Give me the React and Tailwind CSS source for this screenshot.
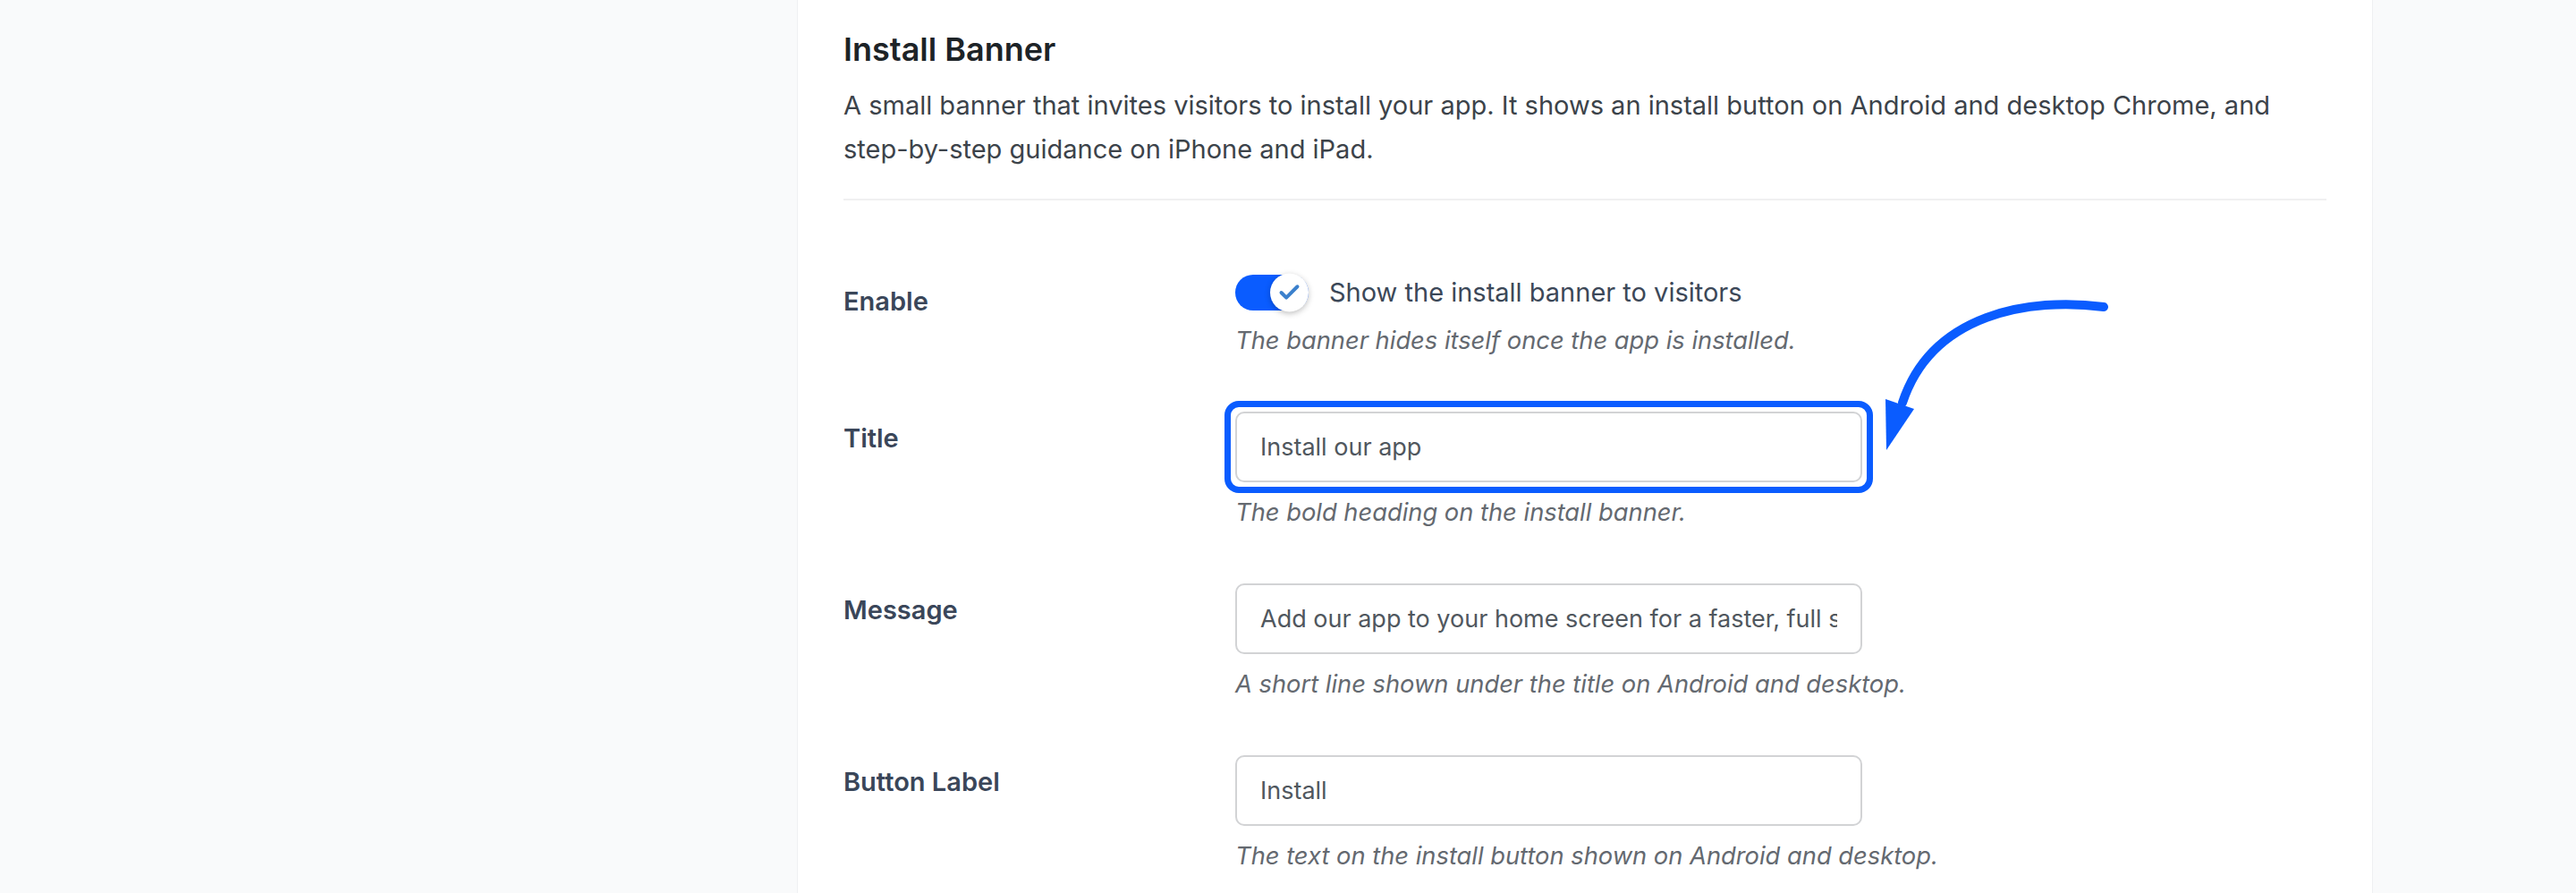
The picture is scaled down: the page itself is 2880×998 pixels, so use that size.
import { Check } from "lucide-react";

const fields = [
  {
    label: "Title",
    value: "Install our app",
    hint: "The bold heading on the install banner.",
    highlight: true,
  },
  {
    label: "Message",
    value: "Add our app to your home screen for a faster, full screen experience.",
    hint: "A short line shown under the title on Android and desktop.",
  },
  {
    label: "Button Label",
    value: "Install",
    hint: "The text on the install button shown on Android and desktop.",
  },
];

function Toggle() {
  return (
    <div className="relative w-[82px] h-[40px] shrink-0">
      <div className="w-full h-full rounded-full bg-[#0a5cff]" />
      <div className="absolute right-0 top-1/2 -translate-y-1/2 w-[43px] h-[43px] rounded-full bg-white shadow-[0_2px_6px_rgba(0,0,0,0.25)] flex items-center justify-center">
        <Check size={27} strokeWidth={3.5} className="text-[#3b80cc]" />
      </div>
    </div>
  );
}

function Row({ label, children, hint, className }) {
  return (
    <div className={"flex " + (className || "")}>
      <div className="w-[438px] shrink-0 pt-[10px] text-[29px] leading-[40px] font-semibold text-[#3a4659]">
        {label}
      </div>
      <div className="flex flex-col">
        {children}
        <p className="mt-[14px] text-[27.3px] leading-[40px] italic text-[#646970]">
          {hint}
        </p>
      </div>
    </div>
  );
}

export default function App() {
  return (
    <div className="relative w-[2880px] h-[998px] overflow-hidden bg-[#f9fafb] font-[Inter,sans-serif]">
      <div className="ml-[891px] w-[1762px] h-full bg-white border-x border-[#eff0f2] px-[51px] pt-[33px]">
        <h2 className="text-[36px] leading-[44px] font-semibold text-[#1d2327]">
          Install Banner
        </h2>
        <p className="mt-[16px] text-[29px] leading-[49px] text-[#3c434a]">
          A small banner that invites visitors to install your app. It shows an
          install button on Android and desktop Chrome, and step-by-step
          guidance on iPhone and iPad.
        </p>
        <div className="mt-[31px] h-[2px] bg-[#f0f0f1]" />

        <Row
          label="Enable"
          hint="The banner hides itself once the app is installed."
          className="mt-[83px]"
        >
          <div className="flex items-center gap-[23px] h-[40px]">
            <Toggle />
            <span className="text-[29px] text-[#3c4858]">
              Show the install banner to visitors
            </span>
          </div>
        </Row>

        {fields.map((f) => (
          <Row key={f.label} label={f.label} hint={f.hint} className="mt-[59px]">
            <div className="relative w-[701px]">
              <input
                readOnly
                value={f.value}
                className="w-full h-[79px] bg-white border-2 border-[#d2d3d5] rounded-[10px] px-[26px] text-[27px] text-[#50575e] outline-none"
              />
              {f.highlight && (
                <div className="absolute -inset-[12px] border-[7px] border-[#0a5cff] rounded-[16px] pointer-events-none" />
              )}
            </div>
          </Row>
        ))}
      </div>

      <svg
        className="absolute left-0 top-0 pointer-events-none"
        width="2880"
        height="998"
        viewBox="0 0 2880 998"
      >
        <path
          d="M2352 343 C2270 332, 2160 350, 2127 450"
          fill="none"
          stroke="#0a5cff"
          strokeWidth="10"
          strokeLinecap="round"
        />
        <polygon points="2108,446 2140,457 2109,503" fill="#0a5cff" />
      </svg>
    </div>
  );
}
